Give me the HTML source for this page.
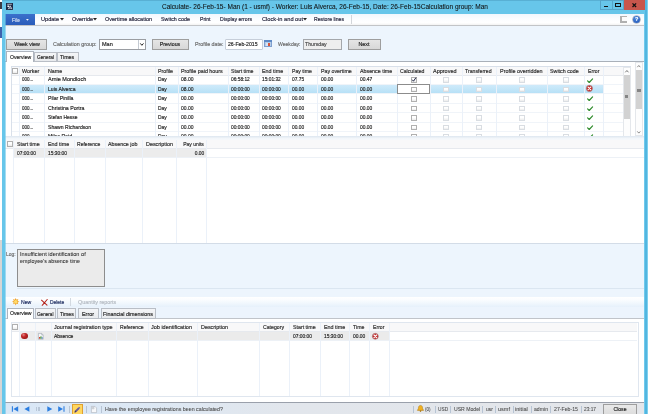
<!DOCTYPE html>
<html lang="en"><head><meta charset="utf-8"><title>Calculate</title>
<style>
html,body{margin:0;padding:0}
body{width:648px;height:414px;overflow:hidden;position:relative;background:#67c6ea;font-family:"Liberation Sans", sans-serif;}
#w{position:absolute;left:-6px;top:-6px;width:660px;height:426px;overflow:hidden;will-change:transform;filter:blur(0.35px)}
#i{position:absolute;left:6px;top:6px;width:648px;height:414px}
.b{position:absolute}
.t{position:absolute;white-space:nowrap;-webkit-text-stroke:0.17px currentColor;}
svg{position:absolute;overflow:visible}
</style></head>
<body>
<div id="w"><div id="i">
<div class="b" style="left:-6px;top:-6px;width:8px;height:246px;background:#ffffff;"></div>
<div class="b" style="left:-6px;top:240px;width:8px;height:180px;background:#d6d6d6;"></div>
<div class="b" style="left:-6px;top:2px;width:7.5px;height:7px;background:#3b3b44;"></div>
<div class="b" style="left:-6px;top:27.4px;width:7.5px;height:11px;background:#3c62ae;"></div>
<div class="b" style="left:2px;top:-6px;width:652px;height:20px;background:#67c6ea;"></div>
<div class="b" style="left:2px;top:-6px;width:652px;height:7px;background:#58b0d4;"></div>
<div class="b" style="left:6.2px;top:3.2px;width:6.9px;height:7.2px;background:#1d2a45;"></div>
<svg style="left:6.2px;top:3.2px" width="6.9" height="7.2" viewBox="0 0 6.9 7.2"><path d="M1.2 1.3H5.8" stroke="#e8ecf2" stroke-width="0.7" fill="none"/><rect x="1.4" y="2.5" width="1.6" height="1.5" fill="#f4f6fa"/><path d="M2.2 6.2L4.2 2.8L6 6.2M3 5.2H5.2" stroke="#dfe4ec" stroke-width="0.8" fill="none"/></svg>
<div class="t" style="top:2.15px;font-size:7.0px;line-height:10px;color:#111;left:-75px;width:800px;text-align:center;transform:scaleX(0.9345);transform-origin:50% 50%;-webkit-text-stroke-width:0.08px;"><span>Calculate- 26-Feb-15- Man (1 - usmf) - Worker: Luis Alverca, 26-Feb-15, Date: 26-Feb-15Calculation group: Man</span></div>
<div class="b" style="left:599.6px;top:0px;width:13.2px;height:9.6px;background:#67c6ea;border:1px solid #55a4c8;box-sizing:border-box;"></div>
<div class="b" style="left:603.6px;top:5.9px;width:4.8px;height:1.3px;background:#111;"></div>
<div class="b" style="left:612.0px;top:0px;width:12.4px;height:9.6px;background:#67c6ea;border:1px solid #55a4c8;box-sizing:border-box;"></div>
<div class="b" style="left:615.2px;top:2.9px;width:5.8px;height:4.0px;background:#5cc0ea;border:1.3px solid #111;box-sizing:border-box;"></div>
<div class="b" style="left:624px;top:0px;width:20.8px;height:9.6px;background:#c8564c;"></div>
<svg style="left:631.8px;top:2.7px" width="4.6" height="4.4" viewBox="0 0 4.6 4.4"><path d="M0.5 0.4L4.1 4M4.1 0.4L0.5 4" stroke="#111" stroke-width="1.3"/></svg>
<div class="b" style="left:5px;top:14px;width:639px;height:10.8px;background:linear-gradient(#f1f7fd 0%,#fbfdff 45%,#ffffff 80%,#f2f2f2 100%);"></div>
<div class="b" style="left:5px;top:24.7px;width:639px;height:1px;background:#c2c4c7;"></div>
<div class="b" style="left:5px;top:25.7px;width:639px;height:0.8px;background:#dde2e8;"></div>
<div class="b" style="left:5px;top:14.3px;width:29.7px;height:10.4px;background:linear-gradient(#3b70cb,#2a5cba);"></div>
<span class="t" style="top:15.75px;font-size:5.6px;line-height:8px;color:#eef2fa;left:12.3px;transform:scaleX(0.8873);transform-origin:0 50%;-webkit-text-stroke-width:0.05px;">File</span>
<svg style="left:26.4px;top:19.45px" width="2.8" height="1.7" viewBox="0 0 2.8 1.7"><path d="M0 0H2.8L1.4 1.7Z" fill="#f4f7fc"/></svg>
<span class="t" style="top:14.75px;font-size:5.8px;line-height:8px;color:#24243c;left:41px;transform:scaleX(0.9624);transform-origin:0 50%;">Update</span>
<svg style="left:59.6px;top:18.400000000000002px" width="4" height="2.4" viewBox="0 0 4 2.4"><path d="M0 0H4L2.0 2.4Z" fill="#222"/></svg>
<span class="t" style="top:14.75px;font-size:5.8px;line-height:8px;color:#24243c;left:72px;transform:scaleX(0.9445);transform-origin:0 50%;">Override</span>
<svg style="left:93.4px;top:18.400000000000002px" width="4" height="2.4" viewBox="0 0 4 2.4"><path d="M0 0H4L2.0 2.4Z" fill="#222"/></svg>
<span class="t" style="top:14.75px;font-size:5.8px;line-height:8px;color:#24243c;left:105px;transform:scaleX(0.9471);transform-origin:0 50%;">Overtime allocation</span>
<span class="t" style="top:14.75px;font-size:5.8px;line-height:8px;color:#24243c;left:161px;transform:scaleX(0.9275);transform-origin:0 50%;">Switch code</span>
<span class="t" style="top:14.75px;font-size:5.8px;line-height:8px;color:#24243c;left:199.5px;transform:scaleX(0.8807);transform-origin:0 50%;">Print</span>
<span class="t" style="top:14.75px;font-size:5.8px;line-height:8px;color:#24243c;left:220px;transform:scaleX(0.8947);transform-origin:0 50%;">Display errors</span>
<span class="t" style="top:14.75px;font-size:5.8px;line-height:8px;color:#24243c;left:261.5px;transform:scaleX(0.9787);transform-origin:0 50%;">Clock-in and out</span>
<svg style="left:303.2px;top:18.400000000000002px" width="4" height="2.4" viewBox="0 0 4 2.4"><path d="M0 0H4L2.0 2.4Z" fill="#222"/></svg>
<span class="t" style="top:14.75px;font-size:5.8px;line-height:8px;color:#24243c;left:314px;transform:scaleX(0.8864);transform-origin:0 50%;">Restore lines</span>
<div class="b" style="left:350.5px;top:15px;width:1px;height:9px;background:#d3d6da;"></div>
<div class="b" style="left:620.2px;top:16px;width:7px;height:6.6px;background:#b0b0b0;"></div>
<div class="b" style="left:622px;top:16.7px;width:4.6px;height:3.9px;background:#fbfbfb;"></div>
<div class="b" style="left:633px;top:15.8px;width:7.2px;height:7.2px;border-radius:50%;background:radial-gradient(circle at 40% 35%,#4d8be0,#1d4fb0);box-shadow:0 0 0 0.6px #8a96a8"></div>
<div class="t" style="top:14.95px;font-size:5.6px;line-height:8px;color:#fff;font-weight:bold;left:236.60000000000002px;width:800px;text-align:center;"><span>?</span></div>
<div class="b" style="left:5px;top:26.4px;width:639px;height:35.1px;background:#edf5fd;"></div>
<div class="b" style="left:6px;top:39px;width:41px;height:10.5px;background:linear-gradient(#e5e5e5,#d8d8d8);border:1px solid #9e9e9e;box-sizing:border-box;"></div>
<div class="t" style="top:39.65px;font-size:5.8px;line-height:8px;color:#1e1e1e;left:-373.5px;width:800px;text-align:center;transform:scaleX(0.9133);transform-origin:50% 50%;"><span>Week view</span></div>
<span class="t" style="top:39.65px;font-size:5.8px;line-height:8px;color:#6a6a6a;left:53px;transform:scaleX(0.9308);transform-origin:0 50%;">Calculation group:</span>
<div class="b" style="left:99px;top:38.8px;width:46.8px;height:10.8px;background:#fff;border:1px solid #9a9da2;box-sizing:border-box;"></div>
<span class="t" style="top:39.65px;font-size:5.8px;line-height:8px;color:#1e1e1e;left:102px;transform:scaleX(0.9573);transform-origin:0 50%;">Man</span>
<div class="b" style="left:138.3px;top:40px;width:1px;height:8.5px;background:#c4cad2;"></div>
<svg style="left:140.1px;top:42.9px" width="3.8" height="2.8" viewBox="0 0 3.8 2.8"><path d="M0.3 0.4L1.9 2.3L3.5 0.4" fill="none" stroke="#222" stroke-width="1.0"/></svg>
<div class="b" style="left:152.2px;top:39px;width:36.5px;height:10.5px;background:linear-gradient(#e5e5e5,#d8d8d8);border:1px solid #9e9e9e;box-sizing:border-box;"></div>
<div class="t" style="top:39.65px;font-size:5.8px;line-height:8px;color:#1e1e1e;left:-230.2px;width:800px;text-align:center;transform:scaleX(0.9086);transform-origin:50% 50%;"><span>Previous</span></div>
<span class="t" style="top:39.65px;font-size:5.8px;line-height:8px;color:#6a6a6a;left:194.5px;transform:scaleX(0.9212);transform-origin:0 50%;">Profile date:</span>
<div class="b" style="left:224.5px;top:39px;width:38px;height:10.5px;background:#fff;border:1px solid #c6ced9;box-sizing:border-box;border-radius:1px;"></div>
<span class="t" style="top:39.65px;font-size:5.8px;line-height:8px;color:#1e1e1e;left:227.5px;transform:scaleX(0.8885);transform-origin:0 50%;">26-Feb-2015</span>
<div class="b" style="left:264.4px;top:40.2px;width:7.2px;height:7.3px;background:#b5cde9;border:1px solid #7f9fcf;box-sizing:border-box;"></div>
<div class="b" style="left:264.4px;top:40.2px;width:7.2px;height:2px;background:#5f8ac6;"></div>
<div class="b" style="left:265.6px;top:43.2px;width:2px;height:3.2px;background:#d6e4f4;"></div>
<div class="b" style="left:268.1px;top:43px;width:2.4px;height:3.3px;background:#d8543a;"></div>
<span class="t" style="top:39.65px;font-size:5.8px;line-height:8px;color:#6a6a6a;left:278px;transform:scaleX(0.8764);transform-origin:0 50%;">Weekday:</span>
<div class="b" style="left:303px;top:39px;width:38.5px;height:10.5px;background:#eeeeee;border:1px solid #a4a7ab;box-sizing:border-box;"></div>
<span class="t" style="top:39.65px;font-size:5.8px;line-height:8px;color:#474747;left:305.3px;transform:scaleX(0.8977);transform-origin:0 50%;">Thursday</span>
<div class="b" style="left:348px;top:39.3px;width:33px;height:10.5px;background:linear-gradient(#e5e5e5,#d8d8d8);border:1px solid #9e9e9e;box-sizing:border-box;"></div>
<div class="t" style="top:39.85px;font-size:5.8px;line-height:8px;color:#1e1e1e;left:-35.80000000000001px;width:800px;text-align:center;transform:scaleX(0.9227);transform-origin:50% 50%;"><span>Next</span></div>
<div class="b" style="left:5px;top:61.5px;width:639px;height:74.7px;background:#fff;"></div>
<div class="b" style="left:5px;top:60.8px;width:639px;height:1px;background:#a9b0b9;"></div>
<div class="b" style="left:34.3px;top:52.2px;width:23px;height:9.4px;background:linear-gradient(#f4f5f7,#e9ebee);border:1px solid #b9bec6;box-sizing:border-box;"></div>
<span class="t" style="top:52.85px;font-size:5.8px;line-height:8px;color:#1e1e1e;left:36.7px;transform:scaleX(0.8242);transform-origin:0 50%;">General</span>
<div class="b" style="left:57.0px;top:52.2px;width:21.8px;height:9.4px;background:linear-gradient(#f4f5f7,#e9ebee);border:1px solid #b9bec6;box-sizing:border-box;"></div>
<span class="t" style="top:52.85px;font-size:5.8px;line-height:8px;color:#1e1e1e;left:60px;transform:scaleX(0.9115);transform-origin:0 50%;">Times</span>
<div class="b" style="left:6px;top:51.4px;width:28.4px;height:10.8px;background:#fff;border:1px solid #adb4be;box-sizing:border-box;border-bottom:none;"></div>
<span class="t" style="top:52.95px;font-size:5.8px;line-height:8px;color:#1e1e1e;left:10px;transform:scaleX(0.8771);transform-origin:0 50%;">Overview</span>
<div class="b" style="left:10.5px;top:66px;width:620.0px;height:73.30000000000001px;background:#fff;border:1px solid #d9e0ea;box-sizing:border-box;"></div>
<div class="b" style="left:11.5px;top:67px;width:612px;height:8px;background:#f8f8f9;"></div>
<div class="b" style="left:19.5px;top:84px;width:584.3px;height:10px;background:linear-gradient(#d2ebfa 0%,#c6e7f9 40%,#b4dff6 100%);"></div>
<div class="b" style="left:11.5px;top:74.5px;width:611.0px;height:1px;background:#e6e9ee;"></div>
<div class="b" style="left:11.5px;top:83.96000000000001px;width:611.0px;height:1px;background:#f0f4f9;"></div>
<div class="b" style="left:11.5px;top:93.42px;width:611.0px;height:1px;background:#f0f4f9;"></div>
<div class="b" style="left:11.5px;top:102.88px;width:611.0px;height:1px;background:#f0f4f9;"></div>
<div class="b" style="left:11.5px;top:112.34px;width:611.0px;height:1px;background:#f0f4f9;"></div>
<div class="b" style="left:11.5px;top:121.80000000000001px;width:611.0px;height:1px;background:#f0f4f9;"></div>
<div class="b" style="left:11.5px;top:131.26px;width:611.0px;height:1px;background:#f0f4f9;"></div>
<div class="b" style="left:11.5px;top:140.72px;width:611.0px;height:1px;background:#f0f4f9;"></div>
<div class="b" style="left:19.0px;top:67px;width:1px;height:72px;background:#ebf1f9;"></div>
<div class="b" style="left:44.0px;top:67px;width:1px;height:72px;background:#ebf1f9;"></div>
<div class="b" style="left:154.5px;top:67px;width:1px;height:72px;background:#ebf1f9;"></div>
<div class="b" style="left:177.7px;top:67px;width:1px;height:72px;background:#ebf1f9;"></div>
<div class="b" style="left:227.7px;top:67px;width:1px;height:72px;background:#ebf1f9;"></div>
<div class="b" style="left:258.7px;top:67px;width:1px;height:72px;background:#ebf1f9;"></div>
<div class="b" style="left:288.2px;top:67px;width:1px;height:72px;background:#ebf1f9;"></div>
<div class="b" style="left:317.0px;top:67px;width:1px;height:72px;background:#ebf1f9;"></div>
<div class="b" style="left:356.2px;top:67px;width:1px;height:72px;background:#ebf1f9;"></div>
<div class="b" style="left:396.5px;top:67px;width:1px;height:72px;background:#ebf1f9;"></div>
<div class="b" style="left:429.5px;top:67px;width:1px;height:72px;background:#ebf1f9;"></div>
<div class="b" style="left:461.7px;top:67px;width:1px;height:72px;background:#ebf1f9;"></div>
<div class="b" style="left:496.0px;top:67px;width:1px;height:72px;background:#ebf1f9;"></div>
<div class="b" style="left:546.7px;top:67px;width:1px;height:72px;background:#ebf1f9;"></div>
<div class="b" style="left:584.0px;top:67px;width:1px;height:72px;background:#ebf1f9;"></div>
<div class="b" style="left:603.3px;top:67px;width:1px;height:72px;background:#ebf1f9;"></div>
<div class="b" style="left:396.6px;top:84.26px;width:33.8px;height:9.860000000000001px;background:#fff;border:1px solid #8c8c8c;box-sizing:border-box;"></div>
<div class="b" style="left:12.299999999999999px;top:68.1px;width:5.8px;height:5.8px;background:linear-gradient(#ffffff 40%,#ececec);border:1px solid #b0b0b0;box-sizing:border-box;"></div>
<span class="t" style="top:67.05px;font-size:5.8px;line-height:8px;color:#2a2a2a;left:22px;transform:scaleX(0.9312);transform-origin:0 50%;">Worker</span>
<span class="t" style="top:67.05px;font-size:5.8px;line-height:8px;color:#2a2a2a;left:47.5px;transform:scaleX(0.9180);transform-origin:0 50%;">Name</span>
<span class="t" style="top:67.05px;font-size:5.8px;line-height:8px;color:#2a2a2a;left:158px;transform:scaleX(0.9125);transform-origin:0 50%;">Profile</span>
<span class="t" style="top:67.05px;font-size:5.8px;line-height:8px;color:#2a2a2a;left:181.2px;transform:scaleX(0.9263);transform-origin:0 50%;">Profile paid hours</span>
<span class="t" style="top:67.05px;font-size:5.8px;line-height:8px;color:#2a2a2a;left:231.2px;transform:scaleX(0.9068);transform-origin:0 50%;">Start time</span>
<span class="t" style="top:67.05px;font-size:5.8px;line-height:8px;color:#2a2a2a;left:262px;transform:scaleX(0.9261);transform-origin:0 50%;">End time</span>
<span class="t" style="top:67.05px;font-size:5.8px;line-height:8px;color:#2a2a2a;left:291.7px;transform:scaleX(0.8776);transform-origin:0 50%;">Pay time</span>
<span class="t" style="top:67.05px;font-size:5.8px;line-height:8px;color:#2a2a2a;left:320.5px;transform:scaleX(0.9075);transform-origin:0 50%;">Pay overtime</span>
<span class="t" style="top:67.05px;font-size:5.8px;line-height:8px;color:#2a2a2a;left:359.5px;transform:scaleX(0.9167);transform-origin:0 50%;">Absence time</span>
<span class="t" style="top:67.05px;font-size:5.8px;line-height:8px;color:#2a2a2a;left:400px;transform:scaleX(0.8940);transform-origin:0 50%;">Calculated</span>
<span class="t" style="top:67.05px;font-size:5.8px;line-height:8px;color:#2a2a2a;left:433.2px;transform:scaleX(0.9465);transform-origin:0 50%;">Approved</span>
<span class="t" style="top:67.05px;font-size:5.8px;line-height:8px;color:#2a2a2a;left:465.3px;transform:scaleX(0.8941);transform-origin:0 50%;">Transferred</span>
<span class="t" style="top:67.05px;font-size:5.8px;line-height:8px;color:#2a2a2a;left:499.8px;transform:scaleX(0.9376);transform-origin:0 50%;">Profile overridden</span>
<span class="t" style="top:67.05px;font-size:5.8px;line-height:8px;color:#2a2a2a;left:550.3px;transform:scaleX(0.9179);transform-origin:0 50%;">Switch code</span>
<span class="t" style="top:67.05px;font-size:5.8px;line-height:8px;color:#2a2a2a;left:587.6px;transform:scaleX(0.8844);transform-origin:0 50%;">Error</span>
<span class="t" style="top:75.48px;font-size:5.8px;line-height:8px;color:#1e1e1e;left:22px;transform:scaleX(0.7785);transform-origin:0 50%;">000...</span>
<span class="t" style="top:75.48px;font-size:5.8px;line-height:8px;color:#1e1e1e;left:47.5px;transform:scaleX(0.9483);transform-origin:0 50%;">Arnie Mondloch</span>
<span class="t" style="top:75.48px;font-size:5.8px;line-height:8px;color:#1e1e1e;left:158px;transform:scaleX(0.8436);transform-origin:0 50%;">Day</span>
<span class="t" style="top:75.48px;font-size:5.8px;line-height:8px;color:#1e1e1e;left:181.2px;transform:scaleX(0.8611);transform-origin:0 50%;">08.00</span>
<span class="t" style="top:75.48px;font-size:5.8px;line-height:8px;color:#1e1e1e;left:231.2px;transform:scaleX(0.8327);transform-origin:0 50%;">06:58:12</span>
<span class="t" style="top:75.48px;font-size:5.8px;line-height:8px;color:#1e1e1e;left:262px;transform:scaleX(0.8327);transform-origin:0 50%;">15:01:32</span>
<span class="t" style="top:75.48px;font-size:5.8px;line-height:8px;color:#1e1e1e;left:291.7px;transform:scaleX(0.8336);transform-origin:0 50%;">07.75</span>
<span class="t" style="top:75.48px;font-size:5.8px;line-height:8px;color:#1e1e1e;left:320.5px;transform:scaleX(0.8474);transform-origin:0 50%;">00.00</span>
<span class="t" style="top:75.48px;font-size:5.8px;line-height:8px;color:#1e1e1e;left:359.5px;transform:scaleX(0.8474);transform-origin:0 50%;">00.47</span>
<div class="b" style="left:411.1px;top:77.22999999999999px;width:5.8px;height:5.8px;background:linear-gradient(#ffffff 40%,#ececec);border:1px solid #b0b0b0;box-sizing:border-box;"></div>
<svg style="left:411.1px;top:77.22999999999999px" width="5.8" height="5.8" viewBox="0 0 5.8 5.8"><path d="M1.2 2.7 L2.5 4.2 L5.0 0.6" fill="none" stroke="#1a2040" stroke-width="1.0"/></svg>
<div class="b" style="left:443.3px;top:77.22999999999999px;width:5.8px;height:5.8px;background:linear-gradient(#ffffff 40%,#ececec);border:1px solid #d9dde2;box-sizing:border-box;"></div>
<div class="b" style="left:476.40000000000003px;top:77.22999999999999px;width:5.8px;height:5.8px;background:linear-gradient(#ffffff 40%,#ececec);border:1px solid #d9dde2;box-sizing:border-box;"></div>
<div class="b" style="left:519.3000000000001px;top:77.22999999999999px;width:5.8px;height:5.8px;background:linear-gradient(#ffffff 40%,#ececec);border:1px solid #d9dde2;box-sizing:border-box;"></div>
<div class="b" style="left:563.0px;top:77.22999999999999px;width:5.8px;height:5.8px;background:linear-gradient(#ffffff 40%,#ececec);border:1px solid #d9dde2;box-sizing:border-box;"></div>
<svg style="left:586.8000000000001px;top:77.53px" width="6.2" height="5.2" viewBox="0 0 6.2 5.2"><path d="M0.6 2.9 L2.2 4.5 L5.6 0.8" fill="none" stroke="#2c8a2a" stroke-width="1.15" stroke-linecap="round" stroke-linejoin="round"/></svg>
<span class="t" style="top:84.94px;font-size:5.8px;line-height:8px;color:#1e1e1e;left:22px;transform:scaleX(0.7785);transform-origin:0 50%;">000...</span>
<span class="t" style="top:84.94px;font-size:5.8px;line-height:8px;color:#1e1e1e;left:47.5px;transform:scaleX(0.8796);transform-origin:0 50%;">Luis Alverca</span>
<span class="t" style="top:84.94px;font-size:5.8px;line-height:8px;color:#1e1e1e;left:158px;transform:scaleX(0.8436);transform-origin:0 50%;">Day</span>
<span class="t" style="top:84.94px;font-size:5.8px;line-height:8px;color:#1e1e1e;left:181.2px;transform:scaleX(0.8611);transform-origin:0 50%;">08.00</span>
<span class="t" style="top:84.94px;font-size:5.8px;line-height:8px;color:#1e1e1e;left:231.2px;transform:scaleX(0.8327);transform-origin:0 50%;">00:00:00</span>
<span class="t" style="top:84.94px;font-size:5.8px;line-height:8px;color:#1e1e1e;left:262px;transform:scaleX(0.8327);transform-origin:0 50%;">00:00:00</span>
<span class="t" style="top:84.94px;font-size:5.8px;line-height:8px;color:#1e1e1e;left:291.7px;transform:scaleX(0.8336);transform-origin:0 50%;">00.00</span>
<span class="t" style="top:84.94px;font-size:5.8px;line-height:8px;color:#1e1e1e;left:320.5px;transform:scaleX(0.8474);transform-origin:0 50%;">00.00</span>
<span class="t" style="top:84.94px;font-size:5.8px;line-height:8px;color:#1e1e1e;left:359.5px;transform:scaleX(0.8474);transform-origin:0 50%;">00.00</span>
<div class="b" style="left:411.1px;top:86.69px;width:5.8px;height:5.8px;background:linear-gradient(#ffffff 40%,#ececec);border:1px solid #b0b0b0;box-sizing:border-box;"></div>
<div class="b" style="left:443.3px;top:86.69px;width:5.8px;height:5.8px;background:linear-gradient(#ffffff 40%,#ececec);border:1px solid #d9dde2;box-sizing:border-box;"></div>
<div class="b" style="left:476.40000000000003px;top:86.69px;width:5.8px;height:5.8px;background:linear-gradient(#ffffff 40%,#ececec);border:1px solid #d9dde2;box-sizing:border-box;"></div>
<div class="b" style="left:519.3000000000001px;top:86.69px;width:5.8px;height:5.8px;background:linear-gradient(#ffffff 40%,#ececec);border:1px solid #d9dde2;box-sizing:border-box;"></div>
<div class="b" style="left:563.0px;top:86.69px;width:5.8px;height:5.8px;background:linear-gradient(#ffffff 40%,#ececec);border:1px solid #d9dde2;box-sizing:border-box;"></div>
<svg style="left:586.0px;top:85.39px" width="6.8" height="6.8" viewBox="0 0 6.8 6.8"><circle cx="3.4" cy="3.4" r="3.1" fill="#c42c2c" stroke="#a58a8a" stroke-width="0.6"/><path d="M2.0999999999999996 2.0999999999999996 L4.7 4.7 M4.7 2.0999999999999996 L2.0999999999999996 4.7" stroke="#fff" stroke-width="1.1" stroke-linecap="round"/></svg>
<span class="t" style="top:94.40px;font-size:5.8px;line-height:8px;color:#1e1e1e;left:22px;transform:scaleX(0.7785);transform-origin:0 50%;">000...</span>
<span class="t" style="top:94.40px;font-size:5.8px;line-height:8px;color:#1e1e1e;left:47.5px;transform:scaleX(0.8889);transform-origin:0 50%;">Pilar Pinilla</span>
<span class="t" style="top:94.40px;font-size:5.8px;line-height:8px;color:#1e1e1e;left:158px;transform:scaleX(0.8436);transform-origin:0 50%;">Day</span>
<span class="t" style="top:94.40px;font-size:5.8px;line-height:8px;color:#1e1e1e;left:181.2px;transform:scaleX(0.8611);transform-origin:0 50%;">00.00</span>
<span class="t" style="top:94.40px;font-size:5.8px;line-height:8px;color:#1e1e1e;left:231.2px;transform:scaleX(0.8327);transform-origin:0 50%;">00:00:00</span>
<span class="t" style="top:94.40px;font-size:5.8px;line-height:8px;color:#1e1e1e;left:262px;transform:scaleX(0.8327);transform-origin:0 50%;">00:00:00</span>
<span class="t" style="top:94.40px;font-size:5.8px;line-height:8px;color:#1e1e1e;left:291.7px;transform:scaleX(0.8336);transform-origin:0 50%;">00.00</span>
<span class="t" style="top:94.40px;font-size:5.8px;line-height:8px;color:#1e1e1e;left:320.5px;transform:scaleX(0.8474);transform-origin:0 50%;">00.00</span>
<span class="t" style="top:94.40px;font-size:5.8px;line-height:8px;color:#1e1e1e;left:359.5px;transform:scaleX(0.8474);transform-origin:0 50%;">00.00</span>
<div class="b" style="left:411.1px;top:96.14999999999999px;width:5.8px;height:5.8px;background:linear-gradient(#ffffff 40%,#ececec);border:1px solid #b0b0b0;box-sizing:border-box;"></div>
<div class="b" style="left:443.3px;top:96.14999999999999px;width:5.8px;height:5.8px;background:linear-gradient(#ffffff 40%,#ececec);border:1px solid #d9dde2;box-sizing:border-box;"></div>
<div class="b" style="left:476.40000000000003px;top:96.14999999999999px;width:5.8px;height:5.8px;background:linear-gradient(#ffffff 40%,#ececec);border:1px solid #d9dde2;box-sizing:border-box;"></div>
<div class="b" style="left:519.3000000000001px;top:96.14999999999999px;width:5.8px;height:5.8px;background:linear-gradient(#ffffff 40%,#ececec);border:1px solid #d9dde2;box-sizing:border-box;"></div>
<div class="b" style="left:563.0px;top:96.14999999999999px;width:5.8px;height:5.8px;background:linear-gradient(#ffffff 40%,#ececec);border:1px solid #d9dde2;box-sizing:border-box;"></div>
<svg style="left:586.8000000000001px;top:96.45px" width="6.2" height="5.2" viewBox="0 0 6.2 5.2"><path d="M0.6 2.9 L2.2 4.5 L5.6 0.8" fill="none" stroke="#2c8a2a" stroke-width="1.15" stroke-linecap="round" stroke-linejoin="round"/></svg>
<span class="t" style="top:103.86px;font-size:5.8px;line-height:8px;color:#1e1e1e;left:22px;transform:scaleX(0.7785);transform-origin:0 50%;">000...</span>
<span class="t" style="top:103.86px;font-size:5.8px;line-height:8px;color:#1e1e1e;left:47.5px;transform:scaleX(0.9061);transform-origin:0 50%;">Christina Portra</span>
<span class="t" style="top:103.86px;font-size:5.8px;line-height:8px;color:#1e1e1e;left:158px;transform:scaleX(0.8436);transform-origin:0 50%;">Day</span>
<span class="t" style="top:103.86px;font-size:5.8px;line-height:8px;color:#1e1e1e;left:181.2px;transform:scaleX(0.8611);transform-origin:0 50%;">00.00</span>
<span class="t" style="top:103.86px;font-size:5.8px;line-height:8px;color:#1e1e1e;left:231.2px;transform:scaleX(0.8327);transform-origin:0 50%;">00:00:00</span>
<span class="t" style="top:103.86px;font-size:5.8px;line-height:8px;color:#1e1e1e;left:262px;transform:scaleX(0.8327);transform-origin:0 50%;">00:00:00</span>
<span class="t" style="top:103.86px;font-size:5.8px;line-height:8px;color:#1e1e1e;left:291.7px;transform:scaleX(0.8336);transform-origin:0 50%;">00.00</span>
<span class="t" style="top:103.86px;font-size:5.8px;line-height:8px;color:#1e1e1e;left:320.5px;transform:scaleX(0.8474);transform-origin:0 50%;">00.00</span>
<span class="t" style="top:103.86px;font-size:5.8px;line-height:8px;color:#1e1e1e;left:359.5px;transform:scaleX(0.8474);transform-origin:0 50%;">00.00</span>
<div class="b" style="left:411.1px;top:105.60999999999999px;width:5.8px;height:5.8px;background:linear-gradient(#ffffff 40%,#ececec);border:1px solid #b0b0b0;box-sizing:border-box;"></div>
<div class="b" style="left:443.3px;top:105.60999999999999px;width:5.8px;height:5.8px;background:linear-gradient(#ffffff 40%,#ececec);border:1px solid #d9dde2;box-sizing:border-box;"></div>
<div class="b" style="left:476.40000000000003px;top:105.60999999999999px;width:5.8px;height:5.8px;background:linear-gradient(#ffffff 40%,#ececec);border:1px solid #d9dde2;box-sizing:border-box;"></div>
<div class="b" style="left:519.3000000000001px;top:105.60999999999999px;width:5.8px;height:5.8px;background:linear-gradient(#ffffff 40%,#ececec);border:1px solid #d9dde2;box-sizing:border-box;"></div>
<div class="b" style="left:563.0px;top:105.60999999999999px;width:5.8px;height:5.8px;background:linear-gradient(#ffffff 40%,#ececec);border:1px solid #d9dde2;box-sizing:border-box;"></div>
<svg style="left:586.8000000000001px;top:105.91px" width="6.2" height="5.2" viewBox="0 0 6.2 5.2"><path d="M0.6 2.9 L2.2 4.5 L5.6 0.8" fill="none" stroke="#2c8a2a" stroke-width="1.15" stroke-linecap="round" stroke-linejoin="round"/></svg>
<span class="t" style="top:113.32px;font-size:5.8px;line-height:8px;color:#1e1e1e;left:22px;transform:scaleX(0.7785);transform-origin:0 50%;">000...</span>
<span class="t" style="top:113.32px;font-size:5.8px;line-height:8px;color:#1e1e1e;left:47.5px;transform:scaleX(0.8474);transform-origin:0 50%;">Stefan Hesse</span>
<span class="t" style="top:113.32px;font-size:5.8px;line-height:8px;color:#1e1e1e;left:158px;transform:scaleX(0.8436);transform-origin:0 50%;">Day</span>
<span class="t" style="top:113.32px;font-size:5.8px;line-height:8px;color:#1e1e1e;left:181.2px;transform:scaleX(0.8611);transform-origin:0 50%;">00.00</span>
<span class="t" style="top:113.32px;font-size:5.8px;line-height:8px;color:#1e1e1e;left:231.2px;transform:scaleX(0.8327);transform-origin:0 50%;">00:00:00</span>
<span class="t" style="top:113.32px;font-size:5.8px;line-height:8px;color:#1e1e1e;left:262px;transform:scaleX(0.8327);transform-origin:0 50%;">00:00:00</span>
<span class="t" style="top:113.32px;font-size:5.8px;line-height:8px;color:#1e1e1e;left:291.7px;transform:scaleX(0.8336);transform-origin:0 50%;">00.00</span>
<span class="t" style="top:113.32px;font-size:5.8px;line-height:8px;color:#1e1e1e;left:320.5px;transform:scaleX(0.8474);transform-origin:0 50%;">00.00</span>
<span class="t" style="top:113.32px;font-size:5.8px;line-height:8px;color:#1e1e1e;left:359.5px;transform:scaleX(0.8474);transform-origin:0 50%;">00.00</span>
<div class="b" style="left:411.1px;top:115.07px;width:5.8px;height:5.8px;background:linear-gradient(#ffffff 40%,#ececec);border:1px solid #b0b0b0;box-sizing:border-box;"></div>
<div class="b" style="left:443.3px;top:115.07px;width:5.8px;height:5.8px;background:linear-gradient(#ffffff 40%,#ececec);border:1px solid #d9dde2;box-sizing:border-box;"></div>
<div class="b" style="left:476.40000000000003px;top:115.07px;width:5.8px;height:5.8px;background:linear-gradient(#ffffff 40%,#ececec);border:1px solid #d9dde2;box-sizing:border-box;"></div>
<div class="b" style="left:519.3000000000001px;top:115.07px;width:5.8px;height:5.8px;background:linear-gradient(#ffffff 40%,#ececec);border:1px solid #d9dde2;box-sizing:border-box;"></div>
<div class="b" style="left:563.0px;top:115.07px;width:5.8px;height:5.8px;background:linear-gradient(#ffffff 40%,#ececec);border:1px solid #d9dde2;box-sizing:border-box;"></div>
<svg style="left:586.8000000000001px;top:115.37px" width="6.2" height="5.2" viewBox="0 0 6.2 5.2"><path d="M0.6 2.9 L2.2 4.5 L5.6 0.8" fill="none" stroke="#2c8a2a" stroke-width="1.15" stroke-linecap="round" stroke-linejoin="round"/></svg>
<span class="t" style="top:122.78px;font-size:5.8px;line-height:8px;color:#1e1e1e;left:22px;transform:scaleX(0.7785);transform-origin:0 50%;">000...</span>
<span class="t" style="top:122.78px;font-size:5.8px;line-height:8px;color:#1e1e1e;left:47.5px;transform:scaleX(0.8835);transform-origin:0 50%;">Shawn Richardson</span>
<span class="t" style="top:122.78px;font-size:5.8px;line-height:8px;color:#1e1e1e;left:158px;transform:scaleX(0.8436);transform-origin:0 50%;">Day</span>
<span class="t" style="top:122.78px;font-size:5.8px;line-height:8px;color:#1e1e1e;left:181.2px;transform:scaleX(0.8611);transform-origin:0 50%;">00.00</span>
<span class="t" style="top:122.78px;font-size:5.8px;line-height:8px;color:#1e1e1e;left:231.2px;transform:scaleX(0.8327);transform-origin:0 50%;">00:00:00</span>
<span class="t" style="top:122.78px;font-size:5.8px;line-height:8px;color:#1e1e1e;left:262px;transform:scaleX(0.8327);transform-origin:0 50%;">00:00:00</span>
<span class="t" style="top:122.78px;font-size:5.8px;line-height:8px;color:#1e1e1e;left:291.7px;transform:scaleX(0.8336);transform-origin:0 50%;">00.00</span>
<span class="t" style="top:122.78px;font-size:5.8px;line-height:8px;color:#1e1e1e;left:320.5px;transform:scaleX(0.8474);transform-origin:0 50%;">00.00</span>
<span class="t" style="top:122.78px;font-size:5.8px;line-height:8px;color:#1e1e1e;left:359.5px;transform:scaleX(0.8474);transform-origin:0 50%;">00.00</span>
<div class="b" style="left:411.1px;top:124.53px;width:5.8px;height:5.8px;background:linear-gradient(#ffffff 40%,#ececec);border:1px solid #b0b0b0;box-sizing:border-box;"></div>
<div class="b" style="left:443.3px;top:124.53px;width:5.8px;height:5.8px;background:linear-gradient(#ffffff 40%,#ececec);border:1px solid #d9dde2;box-sizing:border-box;"></div>
<div class="b" style="left:476.40000000000003px;top:124.53px;width:5.8px;height:5.8px;background:linear-gradient(#ffffff 40%,#ececec);border:1px solid #d9dde2;box-sizing:border-box;"></div>
<div class="b" style="left:519.3000000000001px;top:124.53px;width:5.8px;height:5.8px;background:linear-gradient(#ffffff 40%,#ececec);border:1px solid #d9dde2;box-sizing:border-box;"></div>
<div class="b" style="left:563.0px;top:124.53px;width:5.8px;height:5.8px;background:linear-gradient(#ffffff 40%,#ececec);border:1px solid #d9dde2;box-sizing:border-box;"></div>
<svg style="left:586.8000000000001px;top:124.83000000000001px" width="6.2" height="5.2" viewBox="0 0 6.2 5.2"><path d="M0.6 2.9 L2.2 4.5 L5.6 0.8" fill="none" stroke="#2c8a2a" stroke-width="1.15" stroke-linecap="round" stroke-linejoin="round"/></svg>
<span class="t" style="top:132.24px;font-size:5.8px;line-height:8px;color:#1e1e1e;left:22px;transform:scaleX(0.7785);transform-origin:0 50%;">000...</span>
<span class="t" style="top:132.24px;font-size:5.8px;line-height:8px;color:#1e1e1e;left:47.5px;transform:scaleX(0.8868);transform-origin:0 50%;">Miles Reid</span>
<span class="t" style="top:132.24px;font-size:5.8px;line-height:8px;color:#1e1e1e;left:158px;transform:scaleX(0.8436);transform-origin:0 50%;">Day</span>
<span class="t" style="top:132.24px;font-size:5.8px;line-height:8px;color:#1e1e1e;left:181.2px;transform:scaleX(0.8611);transform-origin:0 50%;">00.00</span>
<span class="t" style="top:132.24px;font-size:5.8px;line-height:8px;color:#1e1e1e;left:231.2px;transform:scaleX(0.8327);transform-origin:0 50%;">00:00:00</span>
<span class="t" style="top:132.24px;font-size:5.8px;line-height:8px;color:#1e1e1e;left:262px;transform:scaleX(0.8327);transform-origin:0 50%;">00:00:00</span>
<span class="t" style="top:132.24px;font-size:5.8px;line-height:8px;color:#1e1e1e;left:291.7px;transform:scaleX(0.8336);transform-origin:0 50%;">00.00</span>
<span class="t" style="top:132.24px;font-size:5.8px;line-height:8px;color:#1e1e1e;left:320.5px;transform:scaleX(0.8474);transform-origin:0 50%;">00.00</span>
<span class="t" style="top:132.24px;font-size:5.8px;line-height:8px;color:#1e1e1e;left:359.5px;transform:scaleX(0.8474);transform-origin:0 50%;">00.00</span>
<div class="b" style="left:411.1px;top:133.98999999999998px;width:5.8px;height:5.8px;background:linear-gradient(#ffffff 40%,#ececec);border:1px solid #b0b0b0;box-sizing:border-box;"></div>
<div class="b" style="left:443.3px;top:133.98999999999998px;width:5.8px;height:5.8px;background:linear-gradient(#ffffff 40%,#ececec);border:1px solid #d9dde2;box-sizing:border-box;"></div>
<div class="b" style="left:476.40000000000003px;top:133.98999999999998px;width:5.8px;height:5.8px;background:linear-gradient(#ffffff 40%,#ececec);border:1px solid #d9dde2;box-sizing:border-box;"></div>
<div class="b" style="left:519.3000000000001px;top:133.98999999999998px;width:5.8px;height:5.8px;background:linear-gradient(#ffffff 40%,#ececec);border:1px solid #d9dde2;box-sizing:border-box;"></div>
<div class="b" style="left:563.0px;top:133.98999999999998px;width:5.8px;height:5.8px;background:linear-gradient(#ffffff 40%,#ececec);border:1px solid #d9dde2;box-sizing:border-box;"></div>
<svg style="left:586.8000000000001px;top:134.29px" width="6.2" height="5.2" viewBox="0 0 6.2 5.2"><path d="M0.6 2.9 L2.2 4.5 L5.6 0.8" fill="none" stroke="#2c8a2a" stroke-width="1.15" stroke-linecap="round" stroke-linejoin="round"/></svg>
<div class="b" style="left:622.6px;top:66.8px;width:8px;height:72px;background:#fdfdfd;border:1px solid #e4e7eb;box-sizing:border-box;"></div>
<div class="b" style="left:623.6px;top:74.6px;width:6.2px;height:44.6px;background:#d2d2d2;"></div>
<svg style="left:624.8px;top:69.9px" width="3.8" height="2.8" viewBox="0 0 3.8 2.8"><path d="M0.3 2.3L1.9 0.5L3.5 2.3" fill="none" stroke="#6a6a6a" stroke-width="0.9"/></svg>
<div class="b" style="left:625.0px;top:95.0px;width:3.4px;height:0.6px;background:#858585;"></div>
<div class="b" style="left:625.0px;top:96.2px;width:3.4px;height:0.6px;background:#858585;"></div>
<div class="b" style="left:625.0px;top:97.4px;width:3.4px;height:0.6px;background:#858585;"></div>
<div class="b" style="left:635px;top:62px;width:7.8px;height:74.3px;background:#fdfdfd;border:1px solid #e4e7eb;box-sizing:border-box;"></div>
<div class="b" style="left:635.8px;top:70.3px;width:6.4px;height:39.2px;background:#d2d2d2;"></div>
<svg style="left:637.2px;top:65.1px" width="3.6" height="2.6" viewBox="0 0 3.6 2.6"><path d="M0.3 2.2L1.8 0.5L3.3 2.2" fill="none" stroke="#7a7a7a" stroke-width="0.9"/></svg>
<svg style="left:637.2px;top:131.2px" width="3.6" height="2.6" viewBox="0 0 3.6 2.6"><path d="M0.3 0.4L1.8 2.1L3.3 0.4" fill="none" stroke="#7a7a7a" stroke-width="0.9"/></svg>
<div class="b" style="left:637.3px;top:88.6px;width:3.4px;height:0.6px;background:#858585;"></div>
<div class="b" style="left:637.3px;top:89.8px;width:3.4px;height:0.6px;background:#858585;"></div>
<div class="b" style="left:637.3px;top:91.0px;width:3.4px;height:0.6px;background:#858585;"></div>
<div class="b" style="left:5px;top:136.3px;width:639px;height:3.6px;background:linear-gradient(#dde6f0,#f2f6fa 60%,#f7f9fc);"></div>
<div class="b" style="left:5px;top:139.6px;width:639px;height:103.7px;background:#fff;"></div>
<div class="b" style="left:5px;top:139.6px;width:639px;height:8.6px;background:#f8f8f9;"></div>
<div class="b" style="left:5px;top:147.9px;width:639px;height:1px;background:#e6e9ee;"></div>
<div class="b" style="left:13.5px;top:157.1px;width:630.5px;height:1px;background:#edf1f6;"></div>
<div class="b" style="left:13.5px;top:148.6px;width:193.2px;height:8.6px;background:#ececec;"></div>
<div class="b" style="left:13.0px;top:139.6px;width:1px;height:103.70000000000002px;background:#ebf1f9;"></div>
<div class="b" style="left:43.8px;top:139.6px;width:1px;height:103.70000000000002px;background:#ebf1f9;"></div>
<div class="b" style="left:73.5px;top:139.6px;width:1px;height:103.70000000000002px;background:#ebf1f9;"></div>
<div class="b" style="left:104.5px;top:139.6px;width:1px;height:103.70000000000002px;background:#ebf1f9;"></div>
<div class="b" style="left:142.2px;top:139.6px;width:1px;height:103.70000000000002px;background:#ebf1f9;"></div>
<div class="b" style="left:176.2px;top:139.6px;width:1px;height:103.70000000000002px;background:#ebf1f9;"></div>
<div class="b" style="left:206.2px;top:139.6px;width:1px;height:103.70000000000002px;background:#ebf1f9;"></div>
<div class="b" style="left:7.000000000000001px;top:141.39999999999998px;width:5.6px;height:5.6px;background:linear-gradient(#ffffff 40%,#ececec);border:1px solid #b0b0b0;box-sizing:border-box;"></div>
<span class="t" style="top:139.75px;font-size:5.8px;line-height:8px;color:#2a2a2a;left:16.7px;transform:scaleX(0.9108);transform-origin:0 50%;">Start time</span>
<span class="t" style="top:139.75px;font-size:5.8px;line-height:8px;color:#2a2a2a;left:47.7px;transform:scaleX(0.9305);transform-origin:0 50%;">End time</span>
<span class="t" style="top:139.75px;font-size:5.8px;line-height:8px;color:#2a2a2a;left:76.7px;transform:scaleX(0.8710);transform-origin:0 50%;">Reference</span>
<span class="t" style="top:139.75px;font-size:5.8px;line-height:8px;color:#2a2a2a;left:108.3px;transform:scaleX(0.9214);transform-origin:0 50%;">Absence job</span>
<span class="t" style="top:139.75px;font-size:5.8px;line-height:8px;color:#2a2a2a;left:145.7px;transform:scaleX(0.9310);transform-origin:0 50%;">Description</span>
<span class="t" style="top:139.75px;font-size:5.8px;line-height:8px;color:#2a2a2a;right:443.8px;transform:scaleX(0.8676);transform-origin:100% 50%;">Pay units</span>
<span class="t" style="top:149.05px;font-size:5.8px;line-height:8px;color:#1e1e1e;left:16.7px;transform:scaleX(0.8415);transform-origin:0 50%;">07:00:00</span>
<span class="t" style="top:149.05px;font-size:5.8px;line-height:8px;color:#1e1e1e;left:47.7px;transform:scaleX(0.8415);transform-origin:0 50%;">15:30:00</span>
<span class="t" style="top:149.05px;font-size:5.8px;line-height:8px;color:#1e1e1e;right:443.7px;transform:scaleX(0.8409);transform-origin:100% 50%;">0.00</span>
<div class="b" style="left:5px;top:243.3px;width:639px;height:53.4px;background:#edf5fd;"></div>
<div class="b" style="left:5px;top:243.0px;width:639px;height:1px;background:#d3dce7;"></div>
<div class="b" style="left:17px;top:287.8px;width:627px;height:1px;background:#dbe6f1;"></div>
<div class="b" style="left:17.2px;top:249px;width:87.6px;height:37.8px;background:#ebebeb;border:1px solid #8d8d8d;box-sizing:border-box;"></div>
<span class="t" style="top:249.65px;font-size:5.8px;line-height:8px;color:#6a6a6a;left:5.6px;transform:scaleX(0.8498);transform-origin:0 50%;">Log:</span>
<span class="t" style="top:249.75px;font-size:5.8px;line-height:8px;color:#2c2c2c;left:20px;transform:scaleX(0.9677);transform-origin:0 50%;-webkit-text-stroke-width:0.06px;">Insufficient identification of</span>
<span class="t" style="top:257.05px;font-size:5.8px;line-height:8px;color:#2c2c2c;left:20px;transform:scaleX(0.9198);transform-origin:0 50%;-webkit-text-stroke-width:0.06px;">employee's absence time</span>
<div class="b" style="left:5px;top:296.6px;width:639px;height:10.6px;background:linear-gradient(#ffffff 0%,#fbfdff 25%,#e6f1fb 100%);"></div>
<div class="b" style="left:5px;top:307.2px;width:639px;height:11px;background:#ecf4fd;"></div>
<svg style="left:12.2px;top:298.3px" width="7.4" height="7.4" viewBox="0 0 6.4 6.4"><path d="M3.2 0L3.9 1.6L5.5 0.9L4.8 2.5L6.4 3.2L4.8 3.9L5.5 5.5L3.9 4.8L3.2 6.4L2.5 4.8L0.9 5.5L1.6 3.9L0 3.2L1.6 2.5L0.9 0.9L2.5 1.6Z" fill="#f0a020"/><circle cx="3.2" cy="3.2" r="1.5" fill="#ffdc6a"/></svg>
<span class="t" style="top:298.25px;font-size:5.8px;line-height:8px;color:#16265c;left:20.7px;transform:scaleX(0.8872);transform-origin:0 50%;">New</span>
<svg style="left:41px;top:298.6px" width="6.8" height="6.8" viewBox="0 0 6.8 6.8"><path d="M0.5 1.2L6 6.2M6.2 0.5L1.2 6.3" stroke="#b5241c" stroke-width="1.05" stroke-linecap="round"/></svg>
<span class="t" style="top:298.25px;font-size:5.8px;line-height:8px;color:#16265c;left:50px;transform:scaleX(0.8470);transform-origin:0 50%;">Delete</span>
<div class="b" style="left:70.2px;top:298px;width:1px;height:8px;background:#d2d9e1;"></div>
<span class="t" style="top:298.25px;font-size:5.8px;line-height:8px;color:#b4bac2;left:77.5px;transform:scaleX(0.9285);transform-origin:0 50%;">Quantity reports</span>
<div class="b" style="left:5px;top:318px;width:639px;height:85px;background:#fff;border:1px solid #9aa0ab;box-sizing:border-box;border-top:none;border-left:none;border-right:none;"></div>
<div class="b" style="left:5px;top:317.7px;width:639px;height:1px;background:#c0c4ca;"></div>
<div class="b" style="left:35px;top:308.2px;width:20.799999999999997px;height:10.4px;background:linear-gradient(#f4f5f7,#e9ebee);border:1px solid #b9bec6;box-sizing:border-box;"></div>
<span class="t" style="top:309.65px;font-size:5.8px;line-height:8px;color:#1e1e1e;left:37.2px;transform:scaleX(0.7952);transform-origin:0 50%;">General</span>
<div class="b" style="left:57.4px;top:308.2px;width:18.6px;height:10.4px;background:linear-gradient(#f4f5f7,#e9ebee);border:1px solid #b9bec6;box-sizing:border-box;"></div>
<span class="t" style="top:309.65px;font-size:5.8px;line-height:8px;color:#1e1e1e;left:59.8px;transform:scaleX(0.8859);transform-origin:0 50%;">Times</span>
<div class="b" style="left:78.2px;top:308.2px;width:20.599999999999994px;height:10.4px;background:linear-gradient(#f4f5f7,#e9ebee);border:1px solid #b9bec6;box-sizing:border-box;"></div>
<span class="t" style="top:309.65px;font-size:5.8px;line-height:8px;color:#1e1e1e;left:82.2px;transform:scaleX(0.9309);transform-origin:0 50%;">Error</span>
<div class="b" style="left:100.8px;top:308.2px;width:54.8px;height:10.4px;background:linear-gradient(#f4f5f7,#e9ebee);border:1px solid #b9bec6;box-sizing:border-box;"></div>
<span class="t" style="top:309.65px;font-size:5.8px;line-height:8px;color:#1e1e1e;left:103.4px;transform:scaleX(0.9235);transform-origin:0 50%;">Financial dimensions</span>
<div class="b" style="left:7.2px;top:307.6px;width:26.4px;height:11.2px;background:#fff;border:1px solid #adb4be;box-sizing:border-box;border-bottom:none;"></div>
<span class="t" style="top:309.35px;font-size:5.8px;line-height:8px;color:#1e1e1e;left:9.8px;transform:scaleX(0.8895);transform-origin:0 50%;">Overview</span>
<div class="b" style="left:11px;top:322px;width:628px;height:75px;background:#fff;border:1px solid #dfe6ef;box-sizing:border-box;"></div>
<div class="b" style="left:12px;top:323px;width:625px;height:8.4px;background:#f8f8f9;"></div>
<div class="b" style="left:12px;top:331.2px;width:625px;height:1px;background:#e6e9ee;"></div>
<div class="b" style="left:19.5px;top:332px;width:370px;height:8px;background:#ebebeb;"></div>
<div class="b" style="left:20px;top:339.5px;width:617px;height:1px;background:#edf1f6;"></div>
<div class="b" style="left:19.0px;top:323px;width:1px;height:73px;background:#ebf1f9;"></div>
<div class="b" style="left:35.0px;top:323px;width:1px;height:73px;background:#ebf1f9;"></div>
<div class="b" style="left:51.2px;top:323px;width:1px;height:73px;background:#ebf1f9;"></div>
<div class="b" style="left:116.2px;top:323px;width:1px;height:73px;background:#ebf1f9;"></div>
<div class="b" style="left:148.2px;top:323px;width:1px;height:73px;background:#ebf1f9;"></div>
<div class="b" style="left:196.5px;top:323px;width:1px;height:73px;background:#ebf1f9;"></div>
<div class="b" style="left:259.1px;top:323px;width:1px;height:73px;background:#ebf1f9;"></div>
<div class="b" style="left:288.5px;top:323px;width:1px;height:73px;background:#ebf1f9;"></div>
<div class="b" style="left:319.7px;top:323px;width:1px;height:73px;background:#ebf1f9;"></div>
<div class="b" style="left:349.1px;top:323px;width:1px;height:73px;background:#ebf1f9;"></div>
<div class="b" style="left:369.1px;top:323px;width:1px;height:73px;background:#ebf1f9;"></div>
<div class="b" style="left:389.1px;top:323px;width:1px;height:73px;background:#ebf1f9;"></div>
<div class="b" style="left:12.4px;top:324.1px;width:5.8px;height:5.8px;background:linear-gradient(#ffffff 40%,#ececec);border:1px solid #b0b0b0;box-sizing:border-box;"></div>
<span class="t" style="top:323.25px;font-size:5.8px;line-height:8px;color:#2a2a2a;left:53.6px;transform:scaleX(0.9471);transform-origin:0 50%;">Journal registration type</span>
<span class="t" style="top:323.25px;font-size:5.8px;line-height:8px;color:#2a2a2a;left:120px;transform:scaleX(0.8822);transform-origin:0 50%;">Reference</span>
<span class="t" style="top:323.25px;font-size:5.8px;line-height:8px;color:#2a2a2a;left:151px;transform:scaleX(0.9493);transform-origin:0 50%;">Job identification</span>
<span class="t" style="top:323.25px;font-size:5.8px;line-height:8px;color:#2a2a2a;left:200.5px;transform:scaleX(0.9310);transform-origin:0 50%;">Description</span>
<span class="t" style="top:323.25px;font-size:5.8px;line-height:8px;color:#2a2a2a;left:263px;transform:scaleX(0.8924);transform-origin:0 50%;">Category</span>
<span class="t" style="top:323.25px;font-size:5.8px;line-height:8px;color:#2a2a2a;left:292.5px;transform:scaleX(0.9108);transform-origin:0 50%;">Start time</span>
<span class="t" style="top:323.25px;font-size:5.8px;line-height:8px;color:#2a2a2a;left:324px;transform:scaleX(0.9305);transform-origin:0 50%;">End time</span>
<span class="t" style="top:323.25px;font-size:5.8px;line-height:8px;color:#2a2a2a;left:352.6px;transform:scaleX(0.8996);transform-origin:0 50%;">Time</span>
<span class="t" style="top:323.25px;font-size:5.8px;line-height:8px;color:#2a2a2a;left:372.6px;transform:scaleX(0.8844);transform-origin:0 50%;">Error</span>
<div class="b" style="left:21.1px;top:332.6px;width:6.8px;height:6.8px;border-radius:50%;background:radial-gradient(circle at 36% 30%,#e88484 0%,#c02626 35%,#a01818 70%,#7c0e0e 100%)"></div>
<svg style="left:38px;top:333px" width="5.6" height="6.6" viewBox="0 0 5.6 6.6"><path d="M0.4 0.4H3.6L5.2 2V6.2H0.4Z" fill="#f6f7f9" stroke="#9aa3af" stroke-width="0.6"/><path d="M3.6 0.4V2H5.2" fill="none" stroke="#9aa3af" stroke-width="0.5"/><rect x="1" y="4" width="1.3" height="1.7" fill="#d2452f"/><rect x="2.3" y="3.4" width="1.3" height="2.3" fill="#4f9e3f"/><rect x="3.6" y="4.3" width="1.1" height="1.4" fill="#3f73c4"/></svg>
<span class="t" style="top:332.45px;font-size:5.8px;line-height:8px;color:#1e1e1e;left:53.6px;transform:scaleX(0.8598);transform-origin:0 50%;">Absence</span>
<span class="t" style="top:332.45px;font-size:5.8px;line-height:8px;color:#1e1e1e;left:292.5px;transform:scaleX(0.8415);transform-origin:0 50%;">07:00:00</span>
<span class="t" style="top:332.45px;font-size:5.8px;line-height:8px;color:#1e1e1e;left:324px;transform:scaleX(0.8415);transform-origin:0 50%;">15:30:00</span>
<span class="t" style="top:332.45px;font-size:5.8px;line-height:8px;color:#1e1e1e;left:352.6px;transform:scaleX(0.8474);transform-origin:0 50%;">00.00</span>
<svg style="left:371.8px;top:332.9px" width="6.6" height="6.6" viewBox="0 0 6.6 6.6"><circle cx="3.3" cy="3.3" r="3.0" fill="#c42c2c" stroke="#a58a8a" stroke-width="0.6"/><path d="M1.9999999999999998 1.9999999999999998 L4.6 4.6 M4.6 1.9999999999999998 L1.9999999999999998 4.6" stroke="#fff" stroke-width="1.1" stroke-linecap="round"/></svg>
<div class="b" style="left:5px;top:402.8px;width:639px;height:18px;background:linear-gradient(90deg,#d9e7f6 0%,#dde8f4 22%,#e2e6ec 45%,#e4e6ea 100%);"></div>
<svg style="left:12px;top:406.0px" width="6.4" height="6" viewBox="0 0 6.4 6"><path d="M0.4 0.2V5.8" stroke="#2b7de0" stroke-width="1.1"/><path d="M6.2 0.3V5.7L1.4 3Z" fill="#2b7de0"/></svg>
<svg style="left:24.2px;top:406.0px" width="5.6" height="6" viewBox="0 0 5.6 6"><path d="M5.4 0.3V5.7L0.4 3Z" fill="#2b7de0"/></svg>
<div class="b" style="left:36.0px;top:406.6px;width:0.9px;height:4.8px;background:#b9c7d8;"></div>
<div class="b" style="left:37.7px;top:406.6px;width:0.9px;height:4.8px;background:#b9c7d8;"></div>
<div class="b" style="left:39.4px;top:406.6px;width:0.9px;height:4.8px;background:#b9c7d8;"></div>
<svg style="left:47.2px;top:406.0px" width="5.6" height="6" viewBox="0 0 5.6 6"><path d="M0.3 0.3V5.7L5.3 3Z" fill="#2b7de0"/></svg>
<svg style="left:58.2px;top:406.0px" width="6.4" height="6" viewBox="0 0 6.4 6"><path d="M6 0.2V5.8" stroke="#2b7de0" stroke-width="1.1"/><path d="M0.2 0.3V5.7L5 3Z" fill="#2b7de0"/></svg>
<div class="b" style="left:68.9px;top:405.6px;width:1px;height:7.0px;background:#b7c4d4;"></div>
<div class="b" style="left:72px;top:403.6px;width:10.8px;height:14px;background:#ffd75e;border:1px solid #e0a030;box-sizing:border-box;"></div>
<svg style="left:73.6px;top:405.8px" width="7" height="7" viewBox="0 0 7 7"><path d="M0.5 6.5L1.1 4.6L5 0.7L6.3 2L2.4 5.9Z" fill="#6a5a9a"/><path d="M0.5 6.5L1.1 4.6L2.4 5.9Z" fill="#3c3450"/><path d="M4.3 1.4L5.6 2.7" stroke="#c9c2e0" stroke-width="0.5"/></svg>
<div class="b" style="left:85.5px;top:405.6px;width:1px;height:7.0px;background:#b7c4d4;"></div>
<svg style="left:90.6px;top:405.8px" width="6" height="7" viewBox="0 0 6 7"><path d="M0.4 0.4H4L5.6 2V6.6H0.4Z" fill="#f7f8fa" stroke="#a9afb8" stroke-width="0.6"/><path d="M1.4 1.4H3V2.8H1.4Z" fill="none" stroke="#9097a2" stroke-width="0.4"/></svg>
<div class="b" style="left:101.0px;top:405.6px;width:1px;height:7.0px;background:#b7c4d4;"></div>
<span class="t" style="top:405.25px;font-size:5.8px;line-height:8px;color:#4c4c4c;left:104.8px;transform:scaleX(0.9177);transform-origin:0 50%;-webkit-text-stroke-width:0.08px;">Have the employee registrations been calculated?</span>
<div class="b" style="left:412.5px;top:405.8px;width:1px;height:6.800000000000011px;background:#b7c4d4;"></div>
<div class="b" style="left:434.5px;top:405.8px;width:1px;height:6.800000000000011px;background:#b7c4d4;"></div>
<div class="b" style="left:450.2px;top:405.8px;width:1px;height:6.800000000000011px;background:#b7c4d4;"></div>
<div class="b" style="left:482.4px;top:405.8px;width:1px;height:6.800000000000011px;background:#b7c4d4;"></div>
<div class="b" style="left:494.5px;top:405.8px;width:1px;height:6.800000000000011px;background:#b7c4d4;"></div>
<div class="b" style="left:512.5px;top:405.8px;width:1px;height:6.800000000000011px;background:#b7c4d4;"></div>
<div class="b" style="left:530.5px;top:405.8px;width:1px;height:6.800000000000011px;background:#b7c4d4;"></div>
<div class="b" style="left:550.3px;top:405.8px;width:1px;height:6.800000000000011px;background:#b7c4d4;"></div>
<div class="b" style="left:580.5px;top:405.8px;width:1px;height:6.800000000000011px;background:#b7c4d4;"></div>
<svg style="left:417px;top:405.4px" width="7" height="7" viewBox="0 0 7 7"><path d="M3.5 0.4C5.2 0.4 5.6 2 5.6 3.4L6.6 5.4H0.4L1.4 3.4C1.4 2 1.8 0.4 3.5 0.4Z" fill="#f0b020" stroke="#a87410" stroke-width="0.5"/><circle cx="3.5" cy="6.1" r="0.8" fill="#a87410"/></svg>
<span class="t" style="top:405.25px;font-size:5.8px;line-height:8px;color:#4c4c4c;left:424.8px;transform:scaleX(0.7894);transform-origin:0 50%;-webkit-text-stroke-width:0.08px;">(0)</span>
<span class="t" style="top:405.25px;font-size:5.8px;line-height:8px;color:#4c4c4c;left:437.7px;transform:scaleX(0.8245);transform-origin:0 50%;-webkit-text-stroke-width:0.08px;">USD</span>
<span class="t" style="top:405.25px;font-size:5.8px;line-height:8px;color:#4c4c4c;left:453.6px;transform:scaleX(0.8839);transform-origin:0 50%;-webkit-text-stroke-width:0.08px;">USR Model</span>
<span class="t" style="top:405.25px;font-size:5.8px;line-height:8px;color:#4c4c4c;left:485.5px;transform:scaleX(0.8558);transform-origin:0 50%;-webkit-text-stroke-width:0.08px;">usr</span>
<span class="t" style="top:405.25px;font-size:5.8px;line-height:8px;color:#4c4c4c;left:498px;transform:scaleX(0.9552);transform-origin:0 50%;-webkit-text-stroke-width:0.08px;">usmf</span>
<span class="t" style="top:405.25px;font-size:5.8px;line-height:8px;color:#4c4c4c;left:515.4px;transform:scaleX(0.9683);transform-origin:0 50%;-webkit-text-stroke-width:0.08px;">initial</span>
<span class="t" style="top:405.25px;font-size:5.8px;line-height:8px;color:#4c4c4c;left:534px;transform:scaleX(0.8863);transform-origin:0 50%;-webkit-text-stroke-width:0.08px;">admin</span>
<span class="t" style="top:405.25px;font-size:5.8px;line-height:8px;color:#4c4c4c;left:554px;transform:scaleX(0.8972);transform-origin:0 50%;-webkit-text-stroke-width:0.08px;">27-Feb-15</span>
<span class="t" style="top:405.25px;font-size:5.8px;line-height:8px;color:#4c4c4c;left:584.3px;transform:scaleX(0.8267);transform-origin:0 50%;-webkit-text-stroke-width:0.08px;">23:17</span>
<div class="b" style="left:602.8px;top:404.4px;width:33.8px;height:14px;background:linear-gradient(#e9e9e9,#dedede 70%);border:1px solid #9e9e9e;box-sizing:border-box;"></div>
<div class="t" style="top:405.45px;font-size:5.8px;line-height:8px;color:#1e1e1e;left:220px;width:800px;text-align:center;transform:scaleX(0.8767);transform-origin:50% 50%;"><span>Close</span></div>
<div class="b" style="left:644px;top:14px;width:10px;height:406px;background:#70c9ec;"></div>
<div class="b" style="left:645.3px;top:-6px;width:1.7px;height:426px;background:#52b6e0;"></div>
<div class="b" style="left:647px;top:-6px;width:7px;height:426px;background:#7fd0ee;"></div>
<div class="b" style="left:2px;top:14px;width:3px;height:406px;background:#67c6ea;"></div>
<div class="b" style="left:5px;top:14px;width:1px;height:406px;background:rgba(103,198,234,0.6);"></div>
</div></div>
</body></html>
